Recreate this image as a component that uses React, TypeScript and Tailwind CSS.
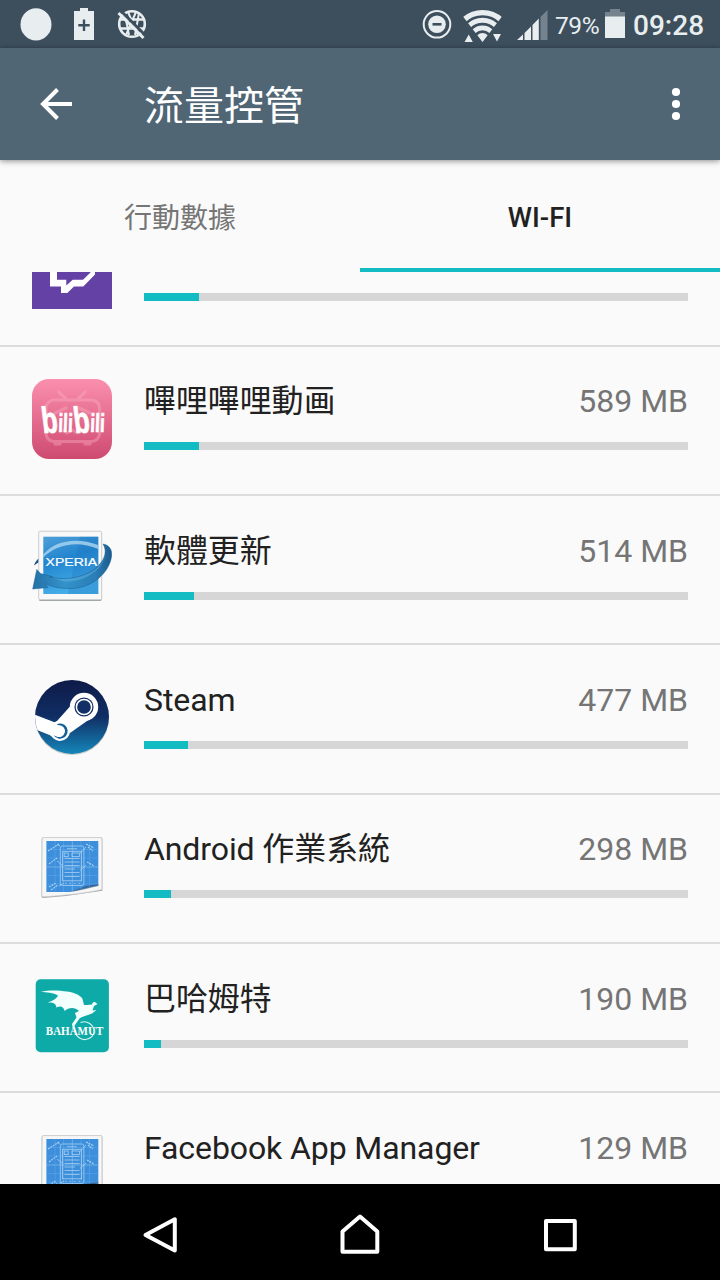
import React from 'react';

interface AppUsage {
  id: string;
  name?: string;
  size?: string;
  percent: number;
  icon: React.ReactNode;
}

// --- APP ICONS ---

const TwitchIcon = () => (
  <svg width="80" height="80" viewBox="0 0 80 80">
    <rect width="80" height="80" fill="#6441a4" />
    <path d="M18 22L22 14H63V45.5L51.3 57.5H42L35.3 64H29V57.5H18Z" fill="#fff" />
    <path d="M25 19H58.5V43.5L51 50.7H40.7L34.3 56.6V50.7H25Z" fill="#6441a4" />
  </svg>
);

const BilibiliIcon = () => (
  <svg width="80" height="80" viewBox="0 0 80 80">
    <defs>
      <linearGradient id="bili" x1="0" y1="0" x2="0" y2="1">
        <stop offset="0" stopColor="#fb8fae" />
        <stop offset="1" stopColor="#ce4a70" />
      </linearGradient>
    </defs>
    <rect width="80" height="80" rx="17" fill="url(#bili)" />
    <g fill="none" stroke="#fbb0c4" strokeWidth="3.2" strokeLinecap="round" opacity="0.4">
      <rect x="14" y="21" width="53.5" height="41.5" rx="8" />
      <path d="M27 13L34 20M53 13L46 20M23 65H28M53 65H58" />
      <path d="M23 34L34 29M47 29L58 34M30 51L35 54L40 51L45 54L50 51" />
    </g>
    <g fill="#fff" fontFamily="Liberation Sans" fontWeight="bold" stroke="#fff" strokeWidth="0.7">
      <text fontSize="37" textLength="16" lengthAdjust="spacingAndGlyphs" transform="translate(11 54) rotate(-2) skewX(5)">b</text>
      <text fontSize="26" textLength="14.5" lengthAdjust="spacingAndGlyphs" transform="translate(26 53) skewX(-2)">ili</text>
      <text fontSize="37" textLength="16" lengthAdjust="spacingAndGlyphs" transform="translate(43 54) rotate(-2) skewX(5)">b</text>
      <text fontSize="26" textLength="14.5" lengthAdjust="spacingAndGlyphs" transform="translate(58 53) skewX(-2)">ili</text>
    </g>
  </svg>
);

const XperiaIcon = () => (
  <svg width="80" height="80" viewBox="0 0 80 80">
    <defs>
      <linearGradient id="xpBg" x1="0" y1="0" x2="0.3" y2="1">
        <stop offset="0" stopColor="#4f9fd8" />
        <stop offset="0.45" stopColor="#2285cf" />
        <stop offset="1" stopColor="#45aee8" />
      </linearGradient>
      <linearGradient id="xpArrow" x1="0" y1="0" x2="1" y2="0">
        <stop offset="0" stopColor="#2470a5" />
        <stop offset="0.4" stopColor="#3492cb" />
        <stop offset="0.8" stopColor="#2a7db6" />
        <stop offset="1" stopColor="#1a5a8d" />
      </linearGradient>
    </defs>
    <path d="M2 37.5C3 34 5 31.5 8 29.5V34C5 35 3.5 36.5 2 37.5Z" fill="#1a5480" />
    <rect x="7" y="4" width="62.5" height="69" rx="1.5" fill="#9a9fa3" />
    <rect x="6.7" y="3.2" width="63" height="68.6" rx="1.5" fill="#f8f8f8" stroke="#bfc2c4" strokeWidth="0.8" />
    <rect x="11.3" y="8.7" width="55" height="57.3" fill="url(#xpBg)" />
    <path d="M48 8.7H66.3V66H36Z" fill="#1d75bd" opacity="0.3" />
    <path d="M11.3 26.5C22 13 44 8.5 66.3 17V21C46 12 24 16 11.3 29.5Z" fill="#a4d2ef" opacity="0.85" />
    <path d="M71 16C77.5 17 80.3 22 79.6 28C77.5 45 60 60.5 38 60.5C29 60.5 21 59.5 13 55.5L16 59.5L0.7 61L4.8 41.5L8.5 45.5L20.5 48.5L17.5 49C36 53 56 49 66.5 37.5C73.5 30 75 22.5 71 16Z" fill="url(#xpArrow)" stroke="#1c5f92" strokeWidth="0.5" />
    <path d="M20 50C36 53 56 49 66.5 38.5C70 35 72 31 73 27C72 40 54 54.5 32 53.5Z" fill="#6cc0ec" opacity="0.4" />
    <text x="13.6" y="38" fontFamily="Liberation Sans" fontSize="10.8" fill="#fff" stroke="#fff" strokeWidth="0.2" textLength="51.5" lengthAdjust="spacingAndGlyphs">XPERIA</text>
  </svg>
);

const SteamIcon = () => (
  <svg width="80" height="80" viewBox="0 0 80 80">
    <defs>
      <linearGradient id="steam" x1="0" y1="0" x2="0" y2="1">
        <stop offset="0" stopColor="#0e1a48" />
        <stop offset="0.5" stopColor="#102f65" />
        <stop offset="1" stopColor="#1587ba" />
      </linearGradient>
      <clipPath id="steamClip">
        <circle cx="40" cy="39.9" r="37" />
      </clipPath>
    </defs>
    <circle cx="40" cy="41" r="37" fill="#000" opacity="0.2" />
    <circle cx="40" cy="39.9" r="37" fill="url(#steam)" />
    <g clipPath="url(#steamClip)">
      <path d="M0 36.5L22.5 45.2L25 44L38 29.5V27L66 32L55 44L38.7 55.5L27 64L17.5 58L0 51Z" fill="#fff" />
      <circle cx="52" cy="30" r="14.2" fill="#fff" />
      <circle cx="28" cy="54" r="10" fill="#fff" />
      <circle cx="52" cy="30" r="9.6" fill="#123066" />
      <circle cx="52" cy="30" r="7.6" fill="none" stroke="#fff" strokeWidth="1.5" />
      <path d="M24.5 47.3A7.6 7.6 0 1 1 21.7 58.2L24.5 59.4A5.9 5.9 0 1 0 26.8 48.2Z" fill="#176096" />
    </g>
  </svg>
);

const BlueprintIcon = () => (
  <svg width="80" height="80" viewBox="0 0 80 80">
    <path d="M9.7 12Q9.7 10.2 11.5 10.2H69Q70.4 10.2 70.4 12V63.8L34 69L11 71Q9.3 71 9.5 69Z" fill="#a5a9ac" />
    <path d="M10.2 12Q10.2 10.6 11.5 10.6H68.6Q69.9 10.6 69.9 12V62.5C54 66 34 68.5 11 69.8Q9.8 69.8 9.9 68Z" fill="#f6f6f6" stroke="#c9cbcd" strokeWidth="0.6" />
    <path d="M14.4 14H66.3V58.5C56 60 46 63.5 38 65H14.4Z" fill="#3d8fdb" />
    <path d="M38 65C46 62.5 54 57.5 66.3 57V59C58 60.5 48 64 38 65Z" fill="#2c4f70" opacity="0.6" />
    <path d="M23 14V65M31.5 14V65M49 14V62M57.5 14V60M14.4 22.5H66.3M14.4 31H66.3M14.4 48.5H66.3M14.4 57H66.3" stroke="#5aa3e6" strokeWidth="0.6" />
    <path d="M40.3 14V64M14.4 40H66.3" stroke="#84bbec" strokeWidth="0.7" />
    <g fill="none" stroke="#a5d0f4" strokeWidth="0.8">
      <rect x="28.3" y="19" width="23.6" height="39.5" rx="2" />
      <rect x="30.6" y="24.3" width="19" height="29.5" />
      <path d="M35 21.7H45M32.5 31.5H47.5M32.5 35H47.5M32.5 38.5H47.5M32.5 42H43M32.5 45.5H47.5M32.5 49.5H47.5" />
      <rect x="32.2" y="26" width="4" height="3.6" />
      <path d="M40 26H47.5V29.5H40ZM33 56.3H34.5M37.5 56.3H39M42 56.3H43.5M46.5 56.3H48" />
      <path d="M25 34L31 39M28 19L25 17.5M54 20L48 26.5M54 38L48 43.5M27 59L32 56" />
      <path d="M16 24L27 17M17 37L25 31M54 17L62 21M56 20L61 24M55 35L62 39M17 60L24 56M19 63L26 58" strokeDasharray="2 0.8" strokeWidth="1.2" />
    </g>
  </svg>
);

const BahamutIcon = () => (
  <svg width="80" height="80" viewBox="0 0 80 80">
    <rect x="3.7" y="3.2" width="73.2" height="73" rx="5" fill="#0eaaa8" />
    <path d="M8.5 16C18 13.5 27 14.5 35 15.5C44 16.8 49 20 50.5 23L52 29L55.5 29L60 28.5C61 26 62 25.5 63.5 26.5L65.5 28L62 30L60.5 34.5L64.5 34L60 37.5C55 39.5 51 40 47.5 42.5L43 49L41 54L40 48L44.5 41.5L43 37L47 35C43 31 37 31 32.5 35C32 31.5 29 29 24.5 31.5C24 27 20.5 26 15.5 26.5C22 24.5 25 22 26 19.5C21 16.5 15 16.5 8.5 16Z" fill="#f2fffd" />
    <path d="M42 48C41 58 47 64 53.5 63.5C59 63 62 59 62 55.5C62 48.5 55 44 48.5 46.5" fill="none" stroke="#d8f5f2" strokeWidth="1.2" />
    <text x="13.8" y="58.8" fontFamily="Liberation Serif" fontWeight="bold" fontSize="11.5" fill="#fff" textLength="57.5" lengthAdjust="spacingAndGlyphs">BAHAMUT</text>
  </svg>
);

// --- DATA ---

const APPS: AppUsage[] = [
  { id: 'twitch', percent: 10.1, icon: <TwitchIcon /> }, // label is scrolled out of view
  { id: 'bilibili', name: '嗶哩嗶哩動画', size: '589 MB', percent: 10.1, icon: <BilibiliIcon /> },
  { id: 'update', name: '軟體更新', size: '514 MB', percent: 9.1, icon: <XperiaIcon /> },
  { id: 'steam', name: 'Steam', size: '477 MB', percent: 8.1, icon: <SteamIcon /> },
  { id: 'android', name: 'Android 作業系統', size: '298 MB', percent: 5.05, icon: <BlueprintIcon /> },
  { id: 'bahamut', name: '巴哈姆特', size: '190 MB', percent: 3.05, icon: <BahamutIcon /> },
  { id: 'facebook', name: 'Facebook App Manager', size: '129 MB', percent: 2, icon: <BlueprintIcon /> },
];

const StatusBar = () => (
  <div className="h-12 shrink-0 flex items-center justify-between bg-[#3d4f5d] text-[#e8edf0]">
    <div className="flex items-center pl-5">
      <svg width="32" height="48" viewBox="0 0 32 48">
        <ellipse cx="16" cy="24.4" rx="15.5" ry="16.2" fill="#e8edf0" />
      </svg>
      <svg className="ml-[22px]" width="20" height="48" viewBox="0 0 20 48">
        <path d="M6 8H14V11H20V40H0V11H6Z" fill="#e8edf0" />
        <path d="M10 19.5V31M4.3 25.3H15.7" stroke="#3d4f5d" strokeWidth="2.4" />
      </svg>
      <svg className="ml-[22px]" width="32" height="48" viewBox="0 0 32 48">
        <g fill="none" stroke="#e8edf0" strokeWidth="2.6">
          <circle cx="16" cy="24" r="12.8" />
          <path d="M4 19.5H28M4 28.5H28" />
          <path d="M12 12L22 35M20 12L10 35M9 15L13 35M23 13L19 35" strokeWidth="2" />
        </g>
        <path d="M5 11L30 36" stroke="#3d4f5d" strokeWidth="3" />
        <path d="M2.5 13L27.5 38" stroke="#e8edf0" strokeWidth="3" />
      </svg>
    </div>
    <div className="flex items-center pr-4">
      <svg width="30" height="48" viewBox="0 0 30 48">
        <circle cx="15" cy="24.3" r="13.3" fill="none" stroke="#e8edf0" strokeWidth="2" />
        <circle cx="15" cy="24.3" r="8.8" fill="#e8edf0" />
        <path d="M10.5 24.3H19.5" stroke="#3d4f5d" strokeWidth="2.6" />
      </svg>
      <svg className="ml-[11px]" width="40" height="48" viewBox="0 0 40 48">
        <defs>
          <clipPath id="wifiFan">
            <path d="M-2 14L0 16.5L19.5 42L39 16.5L41 14V8H-2Z" />
          </clipPath>
        </defs>
        <g clipPath="url(#wifiFan)" fill="none" stroke="#e8edf0">
          <circle cx="19.5" cy="40" r="27.4" strokeWidth="5.4" />
          <circle cx="19.5" cy="40" r="19.7" strokeWidth="5" />
          <circle cx="19.5" cy="40" r="12.2" strokeWidth="4.8" />
          <circle cx="19.5" cy="40" r="7" fill="#e8edf0" stroke="none" />
        </g>
        <path d="M5.7 34.5L9.8 42H1.6ZM30 34H38L34 41.5Z" fill="#e8edf0" />
      </svg>
      <svg className="ml-[14px]" width="31" height="48" viewBox="0 0 31 48">
        <path d="M30.5 10V40H23.5V17Z" fill="#74838e" />
        <path d="M0 40L6 34.5V40ZM7.5 33L14 26.5V40H7.5ZM15.5 25L21.8 18.5V40H15.5Z" fill="#e8edf0" />
      </svg>
      <span className="ml-[7px] w-[50px] text-[24.5px] leading-[46px] tracking-[-0.4px] pt-1">79%</span>
      <svg width="20" height="48" viewBox="0 0 20 48">
        <path d="M5 9H15V12H20V18H0V12H5Z" fill="#74838e" />
        <rect y="16.5" width="20" height="21.5" fill="#e8edf0" />
      </svg>
      <span className="ml-2 w-[71px] text-[28px] font-medium leading-[46px] pt-1">09:28</span>
    </div>
  </div>
);

const Toolbar = () => (
  <header className="relative z-10 h-28 shrink-0 flex items-center bg-[#506675] text-white shadow-[0_1px_6px_rgba(0,0,0,0.45)]">
    <svg className="ml-10" width="32" height="32" viewBox="0 0 32 32" fill="none" stroke="#fff" strokeWidth="4">
      <path d="M32 16H4M17.5 1.5L3 16L17.5 30.5" />
    </svg>
    <h1 className="ml-[72px] flex-1 text-[40px] leading-[56px] pt-[5px]">流量控管</h1>
    <svg className="mr-9" width="16" height="40" viewBox="0 0 16 40" fill="#fff">
      <circle cx="8" cy="8" r="4.1" />
      <circle cx="8" cy="20" r="4.1" />
      <circle cx="8" cy="32" r="4.1" />
    </svg>
  </header>
);

const UsageRow = ({ app }: { app: AppUsage }) => (
  <li className="h-[149.33px] shrink-0 flex items-start gap-8 px-8 border-b-2 border-[#dcdcdc]">
    <div className="w-20 h-20 mt-8 shrink-0">{app.icon}</div>
    <div className="flex-1 pt-[34.5px]">
      <div className="h-10 flex justify-between text-[32px] leading-10 whitespace-nowrap">
        <span className="text-[#212121] tracking-[-0.1px]">{app.name}</span>
        <span className="text-[#757575]">{app.size}</span>
      </div>
      <div className="mt-[21px] h-2 bg-[#d6d6d6]">
        <div className="h-full bg-[#12bcc2]" style={{ width: `${app.percent}%` }} />
      </div>
    </div>
  </li>
);

const App: React.FC = () => {
  return (
    <div className="w-[720px] h-[1280px] flex flex-col overflow-hidden bg-[#fafafa] font-['Roboto','Noto_Sans_CJK_TC',sans-serif]">
      <StatusBar />
      <Toolbar />

      {/* Tabs */}
      <div className="h-28 shrink-0 grid grid-cols-2 text-[28px] text-center">
        <button className="text-[#757575] pt-[5px]">行動數據</button>
        <button className="border-b-4 border-[#12bcc2] pt-2 text-[#212121] text-[27.5px] font-medium">WI-FI</button>
      </div>

      {/* App list, scrolled part way down */}
      <div className="flex-1 min-h-0 overflow-hidden">
        <ul className="flex flex-col -mt-[74.6px]">
          {APPS.map((app) => (
            <UsageRow key={app.id} app={app} />
          ))}
        </ul>
      </div>

      {/* Navigation bar */}
      <nav className="h-24 shrink-0 flex justify-between items-center px-[140px] pt-1.5 bg-black">
        <svg width="40" height="44" viewBox="0 0 40 44" fill="none" stroke="#fff" strokeWidth="4" strokeLinejoin="round">
          <path d="M34.8 6.3V37.5L5.5 21.9Z" />
        </svg>
        <svg width="40" height="44" viewBox="0 0 40 44" fill="none" stroke="#fff" strokeWidth="4" strokeLinejoin="round">
          <path d="M2.5 38.8V18.5L20 3.5L37.3 18.5V38.8Z" />
        </svg>
        <svg width="40" height="44" viewBox="0 0 40 44" fill="none" stroke="#fff" strokeWidth="4" strokeLinejoin="round">
          <rect x="6" y="8" width="28.8" height="28.2" />
        </svg>
      </nav>
    </div>
  );
};

export default App;
